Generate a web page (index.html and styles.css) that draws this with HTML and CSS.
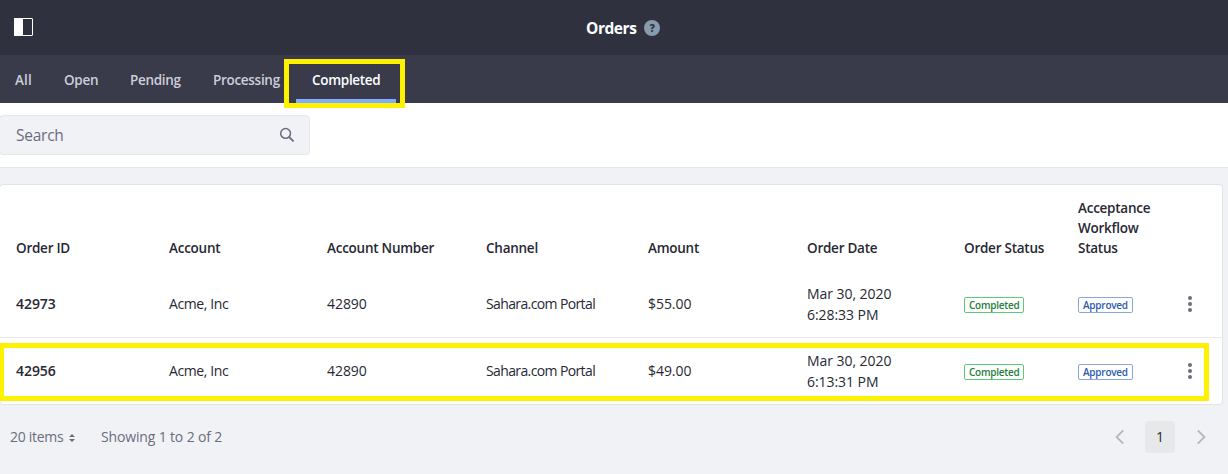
FILE: index.html
```html
<!DOCTYPE html>
<html lang="en">
<head>
<meta charset="utf-8">
<title>Orders</title>
<link rel="stylesheet" href="styles.css">
</head>
<body>
<header class="topbar">
  <svg class="menu-icon" width="19" height="18" viewBox="0 0 19 18"><rect x=".5" y=".5" width="18" height="17" rx=".5" fill="none" stroke="#fff"/><path d="M0 0h9v18H0z" fill="#fff"/></svg>
  <h1 class="title">Orders</h1>
  <span class="help">?</span>
</header>
<nav class="tabs">
  <a class="tab tab-all">All</a>
  <a class="tab tab-open">Open</a>
  <a class="tab tab-pending">Pending</a>
  <a class="tab tab-processing">Processing</a>
  <a class="tab active">Completed<span class="highlight highlight-tab"></span></a>
</nav>
<div class="toolbar">
  <div class="search"><span class="search-text">Search</span>
    <svg width="16" height="16" viewBox="0 0 16 16" fill="none" stroke="#6b6c7e" stroke-width="1.5"><circle cx="6.6" cy="6.4" r="4.9"/><path d="M10.2 10.1l4.400 4.200" stroke-width="1.8"/></svg>
  </div>
</div>
<main class="card">
  <div class="row head">
    <span>Order ID</span><span>Account</span><span>Account Number</span><span>Channel</span><span>Amount</span><span>Order Date</span><span>Order Status</span><span>Acceptance<br>Workflow<br>Status</span><span></span>
  </div>
  <div class="row">
    <strong>42973</strong><span class="account">Acme, Inc</span><span>42890</span><span class="channel">Sahara.com Portal</span><span>$55.00</span><span>Mar 30, 2020<br>6:28:33 PM</span><span class="badge done">Completed</span><span class="badge approved">Approved</span>
    <svg class="dots" width="6" height="16" viewBox="0 0 6 16" fill="#6b6c7e"><circle cx="3" cy="2" r="2"/><circle cx="3" cy="8" r="2"/><circle cx="3" cy="14" r="2"/></svg>
  </div>
  <div class="row">
    <strong>42956</strong><span class="account">Acme, Inc</span><span>42890</span><span class="channel">Sahara.com Portal</span><span>$49.00</span><span>Mar 30, 2020<br>6:13:31 PM</span><span class="badge done">Completed</span><span class="badge approved">Approved</span>
    <svg class="dots" width="6" height="16" viewBox="0 0 6 16" fill="#6b6c7e"><circle cx="3" cy="2" r="2"/><circle cx="3" cy="8" r="2"/><circle cx="3" cy="14" r="2"/></svg>
    <span class="highlight highlight-row"></span>
  </div>
</main>
<footer class="pager">
  <span class="per-page">20 items</span>
  <svg class="sort" width="6" height="8" viewBox="0 0 6 8" fill="#6b6c7e"><path d="M3 0l3 3H0zM3 8l3-3H0z"/></svg>
  <span class="count">Showing 1 to 2 of 2</span>
  <svg class="prev" width="9" height="16" viewBox="0 0 9 16" fill="none" stroke="#b4b5bf" stroke-width="1.8"><path d="M8.200 1.300L1.600 8l6.600 6.700"/></svg>
  <span class="page">1</span>
  <svg class="next" width="9" height="16" viewBox="0 0 9 16" fill="none" stroke="#b4b5bf" stroke-width="1.8"><path d="M.8 1.300L7.400 8 .8 14.700"/></svg>
</footer>
</body>
</html>
```
FILE: styles.css
```css
* { box-sizing: border-box; }
body { margin: 0; height: 474px; overflow: hidden; background: #f1f2f5; color: #272833; font: 14px/21px "Open Sans", "Noto Sans", sans-serif; letter-spacing: -.05px; }
.topbar { display: flex; align-items: center; height: 55px; background: #30313f; color: #fff; padding-left: 14px; }
.menu-icon { margin: 0 553px 1px 0; }
.title { margin: 0; width: 50px; padding-top: 1px; font-size: 15.5px; font-weight: 700; letter-spacing: -.45px; white-space: nowrap; }
.help { width: 16px; height: 16px; margin-left: 8px; padding-left: .5px; border-radius: 50%; background: #869cad; color: #30313f; font-size: 10px; font-weight: 800; line-height: 16px; text-align: center; }
.tabs { display: flex; height: 48px; padding-left: 15px; background: #393a4a; color: #cdced9; font-size: 13.5px; font-weight: 600; line-height: 50px; letter-spacing: -.3px; white-space: nowrap; }
.tab-all { width: 49px; letter-spacing: .1px; }
.tab-open { width: 66px; }
.tab-pending { width: 83px; }
.tab-processing { width: 83px; }
.active { position: relative; width: 100px; padding-left: 16px; color: #fff; border-bottom: 4px solid #80acff; }
.highlight { position: absolute; border: 5px solid #fff200; }
.highlight-tab { left: -12px; top: 4px; width: 121px; height: 49px; }
.toolbar { height: 65px; padding-top: 12px; background: #fff; border-bottom: 1px solid #e7e7ed; }
.search { display: flex; align-items: center; justify-content: space-between; width: 311px; height: 40px; margin-left: -1px; padding: 0 14px 0 16px; background: #f1f2f5; border: 1px solid #e7e7ed; border-radius: 4px; color: #6b6c7e; font-size: 15.5px; letter-spacing: -.25px; }
.card { width: 1224px; height: 221px; margin: 16px 0 0 -1px; background: #fff; border: 1px solid #e2e3e8; border-radius: 4px; }
.row { position: relative; display: grid; grid-template-columns: 153px 158px 159px 162px 159px 157px 114px 109px 10px; align-items: center; height: 67px; padding-left: 16px; white-space: nowrap; }
.row + .row + .row { padding-bottom: 1px; border-top: 1px solid #e7e7ed; }
.head { height: 85px; padding-bottom: 12px; align-items: end; font-size: 13.5px; font-weight: 600; line-height: 20px; letter-spacing: -.25px; }
.account { letter-spacing: -.4px; }
.channel { letter-spacing: -.62px; }
strong { font-weight: 600; }
.badge { justify-self: start; height: 16px; margin-top: 2px; border: 1px solid; border-radius: 2px; padding: 0 4px; font-size: 10px; font-weight: 600; line-height: 15px; letter-spacing: -.25px; }
.done { width: 60px; border-color: #5aca75; color: #287d3c; }
.approved { width: 55px; border-color: #89a7e0; color: #2e5aac; }
.highlight-row { left: -1px; top: 5px; width: 1210px; height: 58px; }
.pager { display: flex; align-items: center; height: 64px; padding-left: 10px; color: #6b6c7e; white-space: nowrap; letter-spacing: -.2px; }
.per-page, .count { padding-bottom: 1px; line-height: 22px; }
.per-page { width: 59px; letter-spacing: -.3px; }
.sort { margin-top: 1px; }
.count { width: 988px; margin-left: 26px; letter-spacing: -.15px; }
.page { width: 30px; height: 32px; margin: 0 22px 0 21px; border-radius: 4px; background: #e7e8ea; color: #272833; line-height: 32px; text-align: center; }
.prev { margin-left: 26px; }
.pager svg { flex: none; }
```
